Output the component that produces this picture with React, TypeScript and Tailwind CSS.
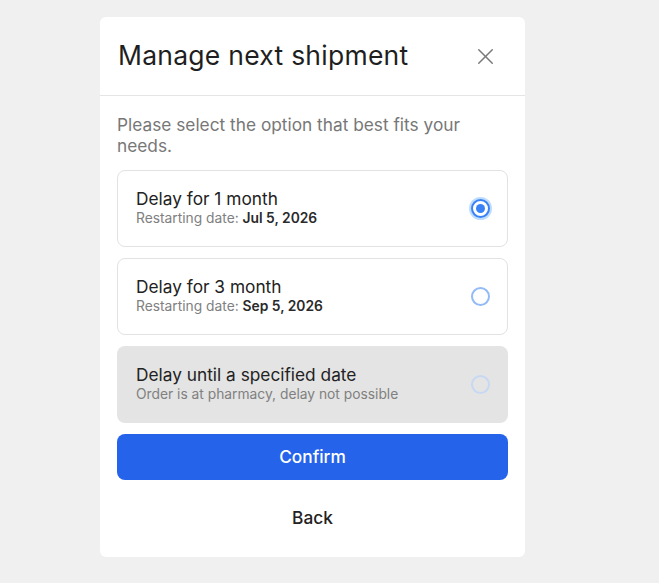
import { X } from "lucide-react";

type Option = {
  title: string;
  label?: string;
  date?: string;
  note?: string;
  selected?: boolean;
  disabled?: boolean;
};

const options: Option[] = [
  { title: "Delay for 1 month", label: "Restarting date:", date: "Jul 5, 2026", selected: true },
  { title: "Delay for 3 month", label: "Restarting date:", date: "Sep 5, 2026" },
  { title: "Delay until a specified date", note: "Order is at pharmacy, delay not possible", disabled: true },
];

function Radio({ selected, disabled }: { selected?: boolean; disabled?: boolean }) {
  if (selected) {
    return (
      <span className="flex h-[19px] w-[19px] items-center justify-center rounded-full border-2 border-[#3b82f6] bg-white shadow-[0_0_0_2px_rgba(147,197,253,0.6)]">
        <span className="h-[9px] w-[9px] rounded-full bg-[#3b82f6]" />
      </span>
    );
  }
  return (
    <span
      className={
        disabled
          ? "block h-[19px] w-[19px] rounded-full border-2 border-[#c7d8f3] bg-[#e4e4e4]"
          : "block h-[19px] w-[19px] rounded-full border-2 border-[#93bbf7] bg-white"
      }
    />
  );
}

export default function App() {
  return (
    <div className="min-h-screen bg-[#f0f0f0] pl-[100px] pt-[17px] font-['Inter','Noto_Sans',sans-serif]">
      <div className="w-[425px] rounded-md bg-white">
        <div className="flex h-[79px] items-center justify-between border-b border-[#e5e5e5] pl-[18px] pr-[26px]">
          <h2 className="text-[26.5px] font-normal tracking-[0.25px] text-[#1f1f1f]">Manage next shipment</h2>
          <X className="h-[27px] w-[27px] text-[#7a7a7a]" strokeWidth={1.3} />
        </div>

        <div className="px-[17px] pt-[18px] pb-[13px]">
          <p className="text-[17.3px] leading-[21px] text-[#777]">
            Please select the option that best fits your needs.
          </p>

          <div className="mt-[14px] flex flex-col gap-[11px]">
            {options.map((opt) => (
              <div
                key={opt.title}
                className={
                  opt.disabled
                    ? "flex h-[77px] items-center justify-between rounded-lg border border-transparent bg-[#e4e4e4] pl-[18px] pr-[17px]"
                    : "flex h-[77px] items-center justify-between rounded-lg border border-[#e2e2e2] bg-white pl-[18px] pr-[17px]"
                }
              >
                <div className="-mt-px">
                  <div className="text-[17.3px] leading-[20px] text-[#222]">{opt.title}</div>
                  {opt.note ? (
                    <div className="text-[13.8px] leading-[18px] text-[#808080]">{opt.note}</div>
                  ) : (
                    <div className="text-[13.8px] leading-[18px] text-[#808080]">
                      {opt.label} <span className="font-semibold text-[#2a2a2a]">{opt.date}</span>
                    </div>
                  )}
                </div>
                <div className="-mt-px flex">
                  <Radio selected={opt.selected} disabled={opt.disabled} />
                </div>
              </div>
            ))}
          </div>

          <button className="mt-[11px] flex h-[46px] w-full items-center justify-center rounded-lg bg-[#2563eb] text-[17.3px] font-medium text-white">
            Confirm
          </button>

          <button className="mt-[12px] flex h-[52px] w-full items-center justify-center text-[17.3px] font-medium text-[#222]">
            Back
          </button>
        </div>
      </div>
    </div>
  );
}
